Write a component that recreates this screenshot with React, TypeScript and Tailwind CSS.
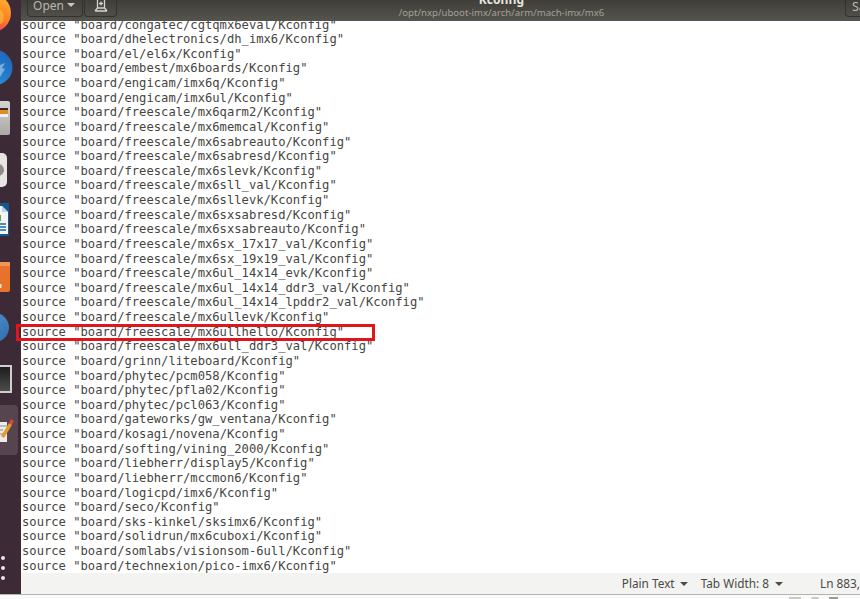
const lines = [
  "congatec/cgtqmx6eval",
  "dhelectronics/dh_imx6",
  "el/el6x",
  "embest/mx6boards",
  "engicam/imx6q",
  "engicam/imx6ul",
  "freescale/mx6qarm2",
  "freescale/mx6memcal",
  "freescale/mx6sabreauto",
  "freescale/mx6sabresd",
  "freescale/mx6slevk",
  "freescale/mx6sll_val",
  "freescale/mx6sllevk",
  "freescale/mx6sxsabresd",
  "freescale/mx6sxsabreauto",
  "freescale/mx6sx_17x17_val",
  "freescale/mx6sx_19x19_val",
  "freescale/mx6ul_14x14_evk",
  "freescale/mx6ul_14x14_ddr3_val",
  "freescale/mx6ul_14x14_lpddr2_val",
  "freescale/mx6ullevk",
  "freescale/mx6ullhello",
  "freescale/mx6ull_ddr3_val",
  "grinn/liteboard",
  "phytec/pcm058",
  "phytec/pfla02",
  "phytec/pcl063",
  "gateworks/gw_ventana",
  "kosagi/novena",
  "softing/vining_2000",
  "liebherr/display5",
  "liebherr/mccmon6",
  "logicpd/imx6",
  "seco",
  "sks-kinkel/sksimx6",
  "solidrun/mx6cuboxi",
  "somlabs/visionsom-6ull",
  "technexion/pico-imx6",
];

function Dock() {
  return (
    <div className="flex w-[21px] shrink-0 flex-col overflow-hidden bg-[#3c2b36]">
      {/* firefox, cut by the screen edge */}
      <svg viewBox="0 0 21 32" className="h-[32px] w-[21px] shrink-0">
        <defs>
          <linearGradient id="ff" x1="0.8" y1="0" x2="0.3" y2="1">
            <stop offset="0" stopColor="#ffb52e" />
            <stop offset="0.55" stopColor="#fb7a25" />
            <stop offset="1" stopColor="#e8246f" />
          </linearGradient>
        </defs>
        <circle cx="-8" cy="13" r="19" fill="url(#ff)" />
        <path d="M-2 8 Q6 12 3 22 Q-2 27 -8 26 Z" fill="#f9d03f" opacity="0.5" />
      </svg>
      {/* thunderbird */}
      <svg viewBox="0 0 21 35" className="mt-[18px] h-[35px] w-[21px] shrink-0">
        <defs>
          <linearGradient id="tb" x1="1" y1="0" x2="0" y2="1">
            <stop offset="0" stopColor="#1b5fb8" />
            <stop offset="1" stopColor="#2f9fe0" />
          </linearGradient>
        </defs>
        <circle cx="-5" cy="17.5" r="17.5" fill="url(#tb)" />
        <path d="M0 15 L5 13 L2 18 L5 19 L0 27 Z" fill="#cfe6f5" opacity="0.5" />
      </svg>
      {/* files */}
      <svg viewBox="0 0 21 34" className="mt-[16px] h-[34px] w-[21px] shrink-0">
        <defs>
          <linearGradient id="fl" x1="0" y1="0" x2="0" y2="1">
            <stop offset="0" stopColor="#d6d4d0" />
            <stop offset="1" stopColor="#a9a8a4" />
          </linearGradient>
        </defs>
        <rect x="-6" y="0" width="16" height="34" rx="2" fill="url(#fl)" />
        <rect x="-6" y="7" width="14" height="2" fill="#3a2a20" />
        <rect x="-6" y="9" width="14" height="4" fill="#e08a2c" />
        <rect x="-6" y="13" width="14" height="3" fill="#f2f1ee" />
      </svg>
      {/* rhythmbox speaker */}
      <svg viewBox="0 0 21 34" className="mt-[18px] h-[34px] w-[21px] shrink-0">
        <rect x="-10" y="0" width="17" height="34" rx="5" fill="#e6e5e2" />
        <circle cx="-2" cy="17" r="6" fill="#8e8c8a" />
      </svg>
      {/* libreoffice writer */}
      <svg viewBox="0 0 21 39" className="mt-[16px] h-[39px] w-[21px] shrink-0">
        <path d="M-4 0 H9 V33 H-4 Z" fill="#15588f" />
        <path d="M-4 3 H2 L8 9 V31 H-4 Z" fill="#f2f4f5" />
        <path d="M2 3 L8 9 H2 Z" fill="#bcd2df" />
        <rect x="-4" y="12" width="5" height="6" fill="#6fa344" />
        <path d="M-4 21 H6 M-4 24 H6 M-4 27 H6" stroke="#1d6aa5" strokeWidth="1.3" />
      </svg>
      {/* software center */}
      <svg viewBox="0 0 21 30" className="mt-[20px] h-[30px] w-[21px] shrink-0">
        <rect x="-8" y="0" width="18" height="30" rx="2" fill="#e8722a" />
        <rect x="-8" y="0" width="18" height="4" fill="#f1945a" />
        <rect x="0" y="22" width="1.5" height="4" fill="#f5e3d2" />
      </svg>
      {/* help */}
      <svg viewBox="0 0 21 29" className="mt-[21px] h-[29px] w-[21px] shrink-0">
        <defs>
          <linearGradient id="hp" x1="0" y1="0" x2="1" y2="1">
            <stop offset="0" stopColor="#5296d2" />
            <stop offset="1" stopColor="#2f6dac" />
          </linearGradient>
        </defs>
        <circle cx="-5.5" cy="14.5" r="14.5" fill="url(#hp)" />
      </svg>
      {/* terminal */}
      <svg viewBox="0 0 21 28" className="mt-[23px] h-[28px] w-[21px] shrink-0">
        <defs>
          <linearGradient id="tm" x1="0" y1="0" x2="0" y2="1">
            <stop offset="0" stopColor="#1d1d1d" />
            <stop offset="1" stopColor="#4c4c4c" />
          </linearGradient>
        </defs>
        <rect x="-6" y="0" width="18" height="28" fill="#cfcfcc" />
        <rect x="-6" y="2" width="16" height="24" fill="url(#tm)" />
      </svg>
      {/* text editor, the running app */}
      <div className="mt-[12px] flex h-[50px] w-[18px] shrink-0 items-center rounded-r-[4px] bg-[#56454f]">
        <svg viewBox="0 0 18 30" className="h-[30px] w-[18px]">
          <rect x="-6" y="7" width="13" height="20" fill="#ececea" />
          <path d="M-2 11 H7 M-2 15 H3 M-2 19 H3" stroke="#8a8a86" strokeWidth="1" />
          <path d="M1 21 L9 8 L12 10 L4 23 Z" fill="#e89a2c" />
          <path d="M9 8 L11 4 L14 6 L12 10 Z" fill="#d8453c" />
        </svg>
      </div>
      <div className="mt-[101px] ml-[1px] flex flex-col gap-[6px]">
        <div className="size-[4px] rounded-full bg-[#e8e8e8]" />
        <div className="size-[4px] rounded-full bg-[#e8e8e8]" />
        <div className="size-[4px] rounded-full bg-[#e8e8e8]" />
      </div>
    </div>
  );
}

function HeaderBar() {
  return (
    <div className="flex h-[21px] shrink-0 items-start bg-gradient-to-b from-[#3f3e39] to-[#55544d] font-['Noto_Sans',sans-serif]">
      <div className="ml-[6px] flex h-[17px] w-[56px] items-start justify-center gap-[3px] overflow-hidden rounded-b-[4px] border-x border-b border-[#33322e] pr-[2px] text-[12px] leading-[11px] text-[#b9b7ae]">
        Open
        <span className="mt-[3px] h-0 w-0 border-x-[4px] border-t-[4px] border-x-transparent border-t-[#c9c7be]" />
      </div>
      <div className="ml-[1px] flex h-[17px] w-[33px] items-start justify-center rounded-b-[4px] border-x border-b border-[#33322e]">
        <svg viewBox="0 0 14 12" className="h-[12px] w-[14px]" fill="none" stroke="#d6d4cc" strokeWidth="1.3">
          <path d="M3.5 0v8h7V0 M1 11h12 M1 11l2.5-3 M13 11l-2.5-3 M7 1.5v4 M5 3.5h4" />
        </svg>
      </div>
      <div className="flex-1 pl-[41px] text-center">
        <div className="mt-[-7px] text-[12px] font-bold leading-[13px] text-[#e8e6df]">Kconfig</div>
        <div className="text-[9.6px] leading-[13px] text-[#a3a298]">/opt/nxp/uboot-imx/arch/arm/mach-imx/mx6</div>
      </div>
      <div className="h-[17px] w-[15px] overflow-hidden whitespace-nowrap rounded-bl-[4px] border-b border-l border-[#33322e] pl-[6px] text-[12.5px] leading-[14px] text-[#b9b7ae]">
        Save
      </div>
    </div>
  );
}

function StatusBar() {
  return (
    <div className="flex h-[21px] shrink-0 items-center justify-end bg-[#f3f3f1] font-['Noto_Sans',sans-serif] text-[11.8px] text-[#4a4a46]">
      <span>Plain Text</span>
      <span className="ml-[5px] h-0 w-0 border-x-[4px] border-t-[4px] border-x-transparent border-t-[#4a4a46]" />
      <span className="ml-[13px]">Tab Width: 8</span>
      <span className="ml-[6px] h-0 w-0 border-x-[4px] border-t-[4px] border-x-transparent border-t-[#4a4a46]" />
      <span className="ml-[37px] w-[40px] overflow-hidden whitespace-nowrap">Ln 883,</span>
    </div>
  );
}

export default function App() {
  return (
    <div className="flex h-[599px] w-[860px] flex-col overflow-hidden bg-white">
      <div className="flex h-[594px] shrink-0">
        <Dock />
        <div className="flex min-w-0 flex-1 flex-col">
          <HeaderBar />
          <div className="relative flex-1 overflow-hidden">
            <div className="mt-[-3.5px] pl-[1px] font-['DejaVu_Sans_Mono',monospace] text-[12.16px] leading-[14.62px] text-[#454542]">
              {lines.map((l) => (
                <div key={l} className="whitespace-pre">
                  source "board/{l}/Kconfig"
                </div>
              ))}
            </div>
          </div>
          <StatusBar />
        </div>
      </div>
      {/* whatever window sits below, only its top edge is in the shot */}
      <div className="flex flex-1 justify-end gap-[10px] border-t border-[#b4b4af] bg-[#fafafa] pr-[22px] pt-[2px]">
        <div className="h-[2px] w-[12px] bg-[#c9c9c6]" />
        <div className="h-[2px] w-[8px] rounded-t-full bg-[#c9c9c6]" />
        <div className="h-[2px] w-[9px] bg-[#9a9a97]" />
      </div>
      {/* red box drawn over the highlighted line */}
      <div className="absolute left-[16px] top-[324px] h-[17px] w-[359px] border-[3px] border-[#e2141c]" />
    </div>
  );
}
